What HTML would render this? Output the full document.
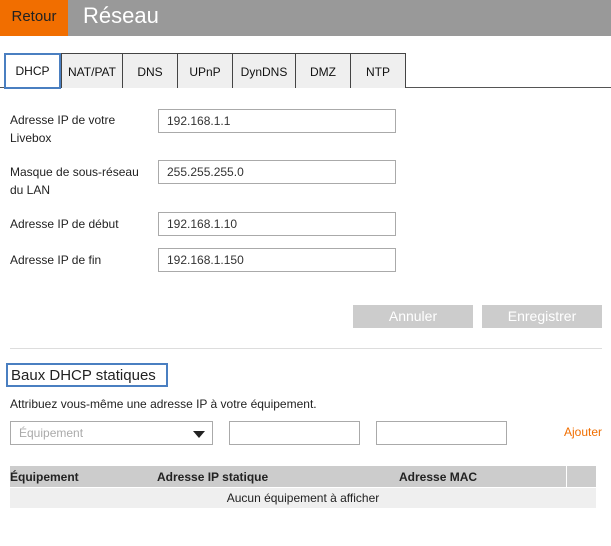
<!DOCTYPE html><html><head><style>
body{margin:0;width:611px;height:546px;background:#fff;font-family:"Liberation Sans",sans-serif;position:relative;overflow:hidden;font-size:12px;color:#222}
.a{position:absolute}
.tab{position:absolute;top:53px;height:35px;background:#efefef;border:1px solid #444;border-bottom:none;box-sizing:border-box;text-align:center;line-height:36px;font-size:12px;color:#111}
.in{position:absolute;border:1px solid #aaa;box-sizing:border-box;height:24px;font-size:12px;line-height:22px;padding-left:8px;color:#333}
.lb{position:absolute;left:10px;font-size:12px;line-height:18px;color:#222}
.btn{position:absolute;top:305px;width:120px;height:23px;background:#ccc;color:#fff;font-size:14px;text-align:center;line-height:23px}
</style></head><body>
<div class="a" style="left:0;top:0;width:611px;height:36px;background:#999"></div>
<div class="a" style="left:0;top:0;width:68px;height:36px;background:#f16e00;color:#222;font-size:15px;line-height:34px;text-align:center">Retour</div>
<div class="a" style="left:83px;top:2px;color:#fff;font-size:22px;line-height:28px">Réseau</div>
<div class="a" style="left:0;top:87px;width:611px;height:1px;background:#555"></div>
<div class="tab" style="left:61px;width:62px">NAT/PAT</div>
<div class="tab" style="left:122px;width:56px">DNS</div>
<div class="tab" style="left:177px;width:56px">UPnP</div>
<div class="tab" style="left:232px;width:64px">DynDNS</div>
<div class="tab" style="left:295px;width:56px">DMZ</div>
<div class="tab" style="left:350px;width:56px">NTP</div>
<div class="tab" style="left:4px;width:57px;height:36px;background:#fff;border:2px solid #4a7fc1;line-height:33px">DHCP</div>
<div class="lb" style="top:111px">Adresse IP de votre<br>Livebox</div>
<div class="in" style="left:158px;top:109px;width:238px">192.168.1.1</div>
<div class="lb" style="top:163px">Masque de sous-réseau<br>du LAN</div>
<div class="in" style="left:158px;top:160px;width:238px">255.255.255.0</div>
<div class="lb" style="top:215px">Adresse IP de début</div>
<div class="in" style="left:158px;top:212px;width:238px">192.168.1.10</div>
<div class="lb" style="top:251px">Adresse IP de fin</div>
<div class="in" style="left:158px;top:248px;width:238px">192.168.1.150</div>
<div class="btn" style="left:353px">Annuler</div>
<div class="btn" style="left:482px">Enregistrer</div>
<div class="a" style="left:10px;top:348px;width:592px;height:1px;background:#ddd"></div>
<div class="a" style="left:6px;top:363px;width:162px;height:24px;border:2px solid #4a7fc1;box-sizing:border-box;font-size:15px;line-height:21px;padding-left:3px;color:#222">Baux DHCP statiques</div>
<div class="a" style="left:10px;top:397px;font-size:12px">Attribuez vous-même une adresse IP à votre équipement.</div>
<div class="in" style="left:10px;top:421px;width:203px;color:#aaa">Équipement<svg style="position:absolute;right:7px;top:9px" width="12" height="7"><path d="M0 0H12L6 7Z" fill="#222"/></svg></div>
<div class="in" style="left:229px;top:421px;width:131px"></div>
<div class="in" style="left:376px;top:421px;width:131px"></div>
<div class="a" style="left:564px;top:425px;color:#f16e00;font-size:12px">Ajouter</div>
<div class="a" style="left:10px;top:466px;width:556px;height:21px;background:#ccc"></div>
<div class="a" style="left:567px;top:466px;width:29px;height:21px;background:#ccc"></div>
<div class="a" style="left:10px;top:470px;font-weight:bold">Équipement</div>
<div class="a" style="left:157px;top:470px;font-weight:bold">Adresse IP statique</div>
<div class="a" style="left:399px;top:470px;font-weight:bold">Adresse MAC</div>
<div class="a" style="left:10px;top:488px;width:586px;height:20px;background:#efefef;text-align:center;line-height:20px">Aucun équipement à afficher</div>
</body></html>
